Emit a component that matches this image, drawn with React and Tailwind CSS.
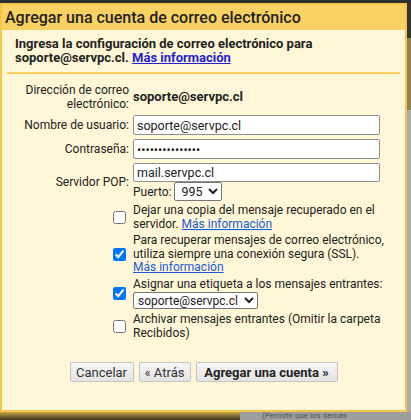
import React from "react";

function Check({ checked }) {
  return (
    <input
      type="checkbox"
      defaultChecked={checked}
      className="w-[13px] h-[13px] mr-[3px]"
    />
  );
}

function Row({ label, children, className = "" }) {
  return (
    <div className={"flex items-center " + className}>
      <div className="w-[122px] shrink-0 flex justify-end text-right leading-[14px]">{label}</div>
      <div className="ml-[4px]">{children}</div>
    </div>
  );
}

function Dialog() {
  const input =
    "block h-[20px] w-[247px] border border-[#8f8f8f] rounded-[2px] bg-white px-[3px] text-[12.5px] text-[#222] outline-none";
  return (
    <div className="w-[407px] h-[409px] shrink-0 border-2 border-[#f4c74c] flex flex-col">
      <div className="h-[25px] bg-[#fad163] flex items-center pl-[3px] text-[16px] font-medium text-[#222]">
        Agregar una cuenta de correo electrónico
      </div>
      <div className="flex-1 bg-[#fff7d7] px-[5px] pt-[7px] text-[12px]">
        <div className="pl-[8px] font-bold text-[13px] leading-[14px]">
          Ingresa la configuración de correo electrónico para
          <br />
          soporte@servpc.cl. <a className="text-[#2222d4] underline">Más información</a>
        </div>
        <div className="mt-[7px] h-[2px] bg-[#fad163]" />

        <div className="mt-[9px] flex flex-col">
          <Row label={<span>Dirección de correo<br />electrónico:</span>}>
            <span className="font-bold text-[13px]">soporte@servpc.cl</span>
          </Row>
          <Row label="Nombre de usuario:" className="mt-[4px]">
            <input className={input} defaultValue="soporte@servpc.cl" />
          </Row>
          <Row label="Contraseña:" className="mt-[4px]">
            <input type="password" className={input} defaultValue="passwordservpc1" />
          </Row>
          <Row label="Servidor POP:" className="mt-[4px]">
            <input className={input.replace("h-[20px]", "h-[19px]")} defaultValue="mail.servpc.cl" />
            <div className="flex items-center gap-[3px]">
              <span>Puerto:</span>
              <select className="h-[19px] w-[48px] border border-[#767676] rounded-[2px] bg-white text-[12.5px] pl-[2px]" defaultValue="995">
                <option>995</option>
                <option>110</option>
              </select>
            </div>
          </Row>

          <Row label={<Check />} className="mt-[3px]">
            <div className="whitespace-nowrap leading-[13.5px]">
              Dejar una copia del mensaje recuperado en el
              <br />
              servidor. <a className="text-[#1a5ad8] underline">Más información</a>
            </div>
          </Row>
          <Row label={<Check checked />} className="mt-[3px]">
            <div className="whitespace-nowrap leading-[13.5px]">
              Para recuperar mensajes de correo electrónico,
              <br />
              utiliza siempre una conexión segura (SSL).
              <br />
              <a className="text-[#1a5ad8] underline">Más información</a>
            </div>
          </Row>
          <Row label={<Check checked />} className="mt-[3px]">
            <div className="whitespace-nowrap leading-[13.5px]">
              Asignar una etiqueta a los mensajes entrantes:
              <select className="block mt-[1px] h-[17px] w-[125px] border border-[#767676] rounded-[2px] bg-white text-[12px] leading-[14px] pl-0" defaultValue="s">
                <option value="s">soporte@servpc.cl</option>
              </select>
            </div>
          </Row>
          <Row label={<Check />} className="mt-[4px]">
            <div className="whitespace-nowrap leading-[13.5px]">
              Archivar mensajes entrantes (Omitir la carpeta
              <br />
              Recibidos)
            </div>
          </Row>
        </div>

        <div className="mt-[22px] flex justify-center gap-[5px]">
          <button className="h-[20px] w-[64px] border border-[#c4c4c4] rounded-[2px] bg-gradient-to-b from-[#f6f6f6] to-[#e4e4e4] text-[13px] text-[#333]">
            Cancelar
          </button>
          <button className="h-[20px] w-[52px] border border-[#c4c4c4] rounded-[2px] bg-gradient-to-b from-[#f6f6f6] to-[#e4e4e4] text-[13px] text-[#333]">
            « Atrás
          </button>
          <button className="h-[20px] w-[142px] border border-[#c4c4c4] rounded-[2px] bg-gradient-to-b from-[#f6f6f6] to-[#e4e4e4] text-[13px] font-bold text-[#222]">
            Agregar una cuenta »
          </button>
        </div>
      </div>
    </div>
  );
}

export default function App() {
  return (
    <div className="w-[411px] h-[420px] bg-[#2f2f2f] flex flex-col overflow-hidden font-[Roboto,sans-serif] text-[#222]">
      <div className="h-[3px] shrink-0" />
      <div className="flex shrink-0">
        <Dialog />
        <div className="flex-1 flex flex-col">
          <div className="h-[35px] bg-[#343434]" />
          <div className="h-[72px] bg-[#8c8252]" />
          <div className="flex-1 bg-[#ababab]" />
        </div>
      </div>
      <div className="flex-1 flex">
        <div className="w-[240px] bg-gradient-to-b from-[#c9a944] to-[#3e3622]" />
        <div className="flex-1 bg-[#9d9d9d] overflow-hidden whitespace-nowrap text-[8px] leading-[8px] text-[#555] pl-[22px]">
          (Permitir que los demás
        </div>
      </div>
    </div>
  );
}
